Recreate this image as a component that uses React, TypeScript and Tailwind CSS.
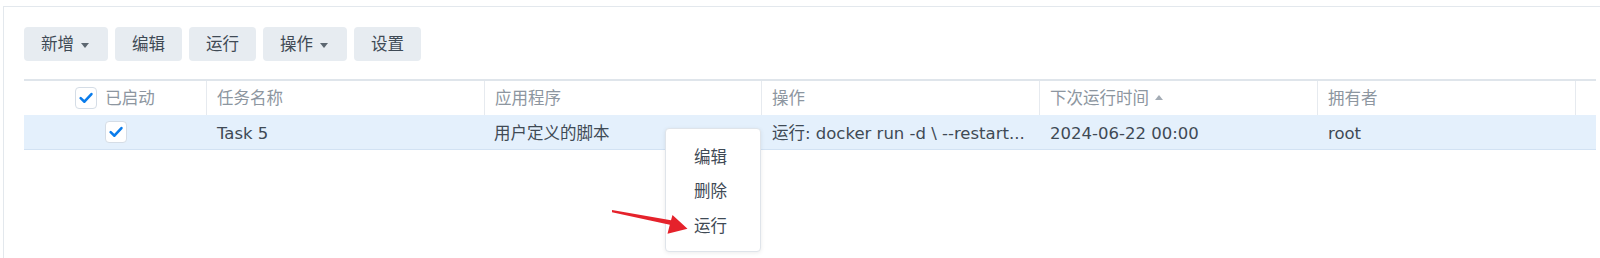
import React from "react";

const Caret = ({ up }: { up?: boolean }) => (
  <svg width="8" height="5" viewBox="0 0 8 5" className="shrink-0">
    {up ? <path d="M0 5 L4 0 L8 5 Z" fill="#a4acb5" /> : <path d="M0 0 L8 0 L4 5 Z" fill="#5c6670" />}
  </svg>
);

const Check = () => (
  <div className="w-[22px] h-[22px] rounded-[4px] border border-[#d5dde6] bg-white flex items-center justify-center shrink-0">
    <svg width="16" height="16" viewBox="0 0 15 15">
      <path d="M2.5 7.6 L6 11 L12.6 3.8" fill="none" stroke="#0a7ceb" strokeWidth="2.4" strokeLinecap="round" strokeLinejoin="round" />
    </svg>
  </div>
);

const ToolButton = ({ label, w, menu }: { label: string; w: string; menu?: boolean }) => (
  <div
    className={`${w} h-[34px] pt-[2px] rounded-[4px] bg-[#e7ecf1] flex items-center text-[16.5px] text-[#3f4a55] ${
      menu ? "pl-[17px]" : "justify-center"
    }`}
  >
    <span>{label}</span>
    {menu && <span className="ml-[7px] mt-[1px]"><Caret /></span>}
  </div>
);

const headers = ["任务名称", "应用程序", "操作", "下次运行时间", "拥有者"];
const cols = "grid-cols-[183px_278px_277px_278px_278px_258px_1fr]";

export default function App() {
  return (
    <div className="relative w-[1600px] h-[258px] bg-white overflow-hidden font-['DejaVu_Sans','Noto_Sans_CJK_SC',sans-serif]">
      <div className="ml-[3px] mt-[6px] h-[252px] border-t border-l border-[#e3e8ed] pl-[20px] pt-[20px] pr-[4px]">
        <div className="flex gap-[7px]">
          <ToolButton label="新增" w="w-[84px]" menu />
          <ToolButton label="编辑" w="w-[67px]" />
          <ToolButton label="运行" w="w-[67px]" />
          <ToolButton label="操作" w="w-[84px]" menu />
          <ToolButton label="设置" w="w-[67px]" />
        </div>

        <div className="mt-[18px]">
          <div className={`grid ${cols} h-[36px] border-t-2 border-[#dfe5eb] text-[16.5px] text-[#8d96a0]`}>
            <div className="flex items-center justify-center gap-[8px] border-r border-[#e6eaef]">
              <Check />
              <span className="pt-[2px]">已启动</span>
            </div>
            {headers.map((h, i) => (
              <div key={h} className="flex items-center pl-[10px] pt-[2px] border-r border-[#e6eaef]">
                <span>{h}</span>
                {i === 3 && <span className="ml-[6px] mb-[3px]"><Caret up /></span>}
              </div>
            ))}
            <div />
          </div>

          <div className={`grid ${cols} h-[35px] bg-[#e4f0fc] border-b border-[#d2e2f3] text-[16.5px] text-[#3f4a55]`}>
            <div className="flex items-center justify-center">
              <Check />
            </div>
            <div className="flex items-center pl-[10px] pt-[4px]">Task 5</div>
            <div className="flex items-center pl-[9px] pt-[4px]">用户定义的脚本</div>
            <div className="flex items-center pl-[10px] pr-[8px] pt-[4px] whitespace-nowrap overflow-hidden">运行: docker run -d \ --restart...</div>
            <div className="flex items-center pl-[10px] pt-[4px]">2024-06-22 00:00</div>
            <div className="flex items-center pl-[10px] pt-[4px]">root</div>
            <div />
          </div>
        </div>
      </div>

      <div className="absolute left-[665px] top-[128px] w-[96px] h-[124px] bg-white border border-[#dfe4ea] rounded-[4px] shadow-[0_1px_4px_rgba(0,0,0,0.08)] pt-[12px] text-[16.5px] text-[#3f4a55]">
        {["编辑", "删除", "运行"].map((m) => (
          <div key={m} className="h-[34.5px] flex items-center pl-[28px]">{m}</div>
        ))}
      </div>

      <svg className="absolute left-0 top-0 pointer-events-none" width="1600" height="258">
        <polygon points="612,210 671,220.2 672.5,215 687.5,228.8 667.5,233.8 669.8,224.8 612,212.2" fill="#e5222b" />
      </svg>
    </div>
  );
}
